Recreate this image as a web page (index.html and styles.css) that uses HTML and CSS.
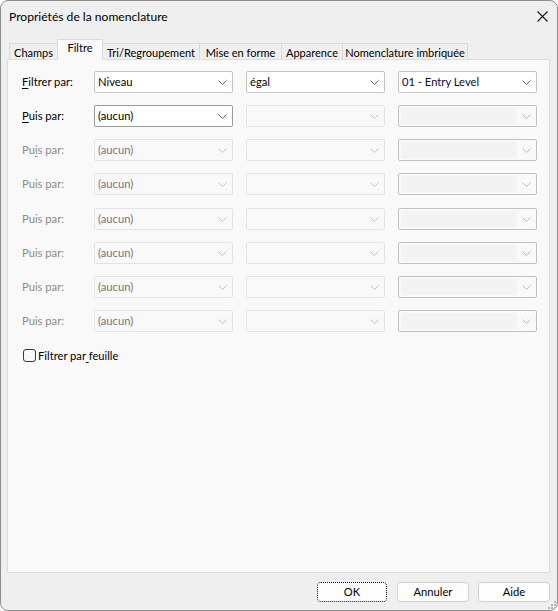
FILE: index.html
```html
<!DOCTYPE html>
<html lang="fr">
<head>
<meta charset="utf-8">
<title>Propriétés de la nomenclature</title>
<link rel="stylesheet" href="styles.css">
</head>
<body>
<div class="window">
  <div class="titlebar">
    <span class="title">Propriétés de la nomenclature</span>
    <svg class="close" width="11" height="11" viewBox="0 0 11 11"><path d="M0.5 0.5 L10.5 10.5 M10.5 0.5 L0.5 10.5" stroke="#1c1c1c" stroke-width="1.1" fill="none"/></svg>
  </div>
  <div class="tabs">
    <div class="tab w-champs">Champs</div>
    <div class="tab active w-filtre">Filtre</div>
    <div class="tab w-tri">Tri/Regroupement</div>
    <div class="tab w-mise">Mise en forme</div>
    <div class="tab w-app">Apparence</div>
    <div class="tab w-nom">Nomenclature imbriquée</div>
  </div>
  <div class="panel">
    <div class="grid">
      <div class="label"><u>F</u>iltrer par:</div>
      <div class="combo on"><span>Niveau</span><svg class="chev" viewBox="0 0 9 5"><path d="M0.5 0.5 L4.5 4.5 L8.5 0.5" fill="none" stroke="#5f5f5f" stroke-width="1"/></svg></div>
      <div class="combo on"><span>égal</span><svg class="chev" viewBox="0 0 9 5"><path d="M0.5 0.5 L4.5 4.5 L8.5 0.5" fill="none" stroke="#5f5f5f" stroke-width="1"/></svg></div>
      <div class="combo on"><span class="navy">01 - Entry Level</span><svg class="chev" viewBox="0 0 9 5"><path d="M0.5 0.5 L4.5 4.5 L8.5 0.5" fill="none" stroke="#5f5f5f" stroke-width="1"/></svg></div>

      <div class="label"><u>P</u>uis par:</div>
      <div class="combo on focus"><span>(aucun)</span><svg class="chev" viewBox="0 0 9 5"><path d="M0.5 0.5 L4.5 4.5 L8.5 0.5" fill="none" stroke="#5f5f5f" stroke-width="1"/></svg></div>
      <div class="combo off"><svg class="chev" viewBox="0 0 9 5"><path d="M0.5 0.5 L4.5 4.5 L8.5 0.5" fill="none" stroke="#c4c4c4" stroke-width="1"/></svg></div>
      <div class="combo edit"><i class="field"></i><svg class="chev" viewBox="0 0 9 5"><path d="M0.5 0.5 L4.5 4.5 L8.5 0.5" fill="none" stroke="#b8b8b8" stroke-width="1"/></svg></div>

      <div class="label dis">Pu<u>i</u>s par:</div>
      <div class="combo off"><span>(aucun)</span><svg class="chev" viewBox="0 0 9 5"><path d="M0.5 0.5 L4.5 4.5 L8.5 0.5" fill="none" stroke="#c4c4c4" stroke-width="1"/></svg></div>
      <div class="combo off"><svg class="chev" viewBox="0 0 9 5"><path d="M0.5 0.5 L4.5 4.5 L8.5 0.5" fill="none" stroke="#c4c4c4" stroke-width="1"/></svg></div>
      <div class="combo edit"><i class="field"></i><svg class="chev" viewBox="0 0 9 5"><path d="M0.5 0.5 L4.5 4.5 L8.5 0.5" fill="none" stroke="#b8b8b8" stroke-width="1"/></svg></div>

      <div class="label dis">Puis par:</div>
      <div class="combo off"><span>(aucun)</span><svg class="chev" viewBox="0 0 9 5"><path d="M0.5 0.5 L4.5 4.5 L8.5 0.5" fill="none" stroke="#c4c4c4" stroke-width="1"/></svg></div>
      <div class="combo off"><svg class="chev" viewBox="0 0 9 5"><path d="M0.5 0.5 L4.5 4.5 L8.5 0.5" fill="none" stroke="#c4c4c4" stroke-width="1"/></svg></div>
      <div class="combo edit"><i class="field"></i><svg class="chev" viewBox="0 0 9 5"><path d="M0.5 0.5 L4.5 4.5 L8.5 0.5" fill="none" stroke="#b8b8b8" stroke-width="1"/></svg></div>

      <div class="label dis">Puis par:</div>
      <div class="combo off"><span>(aucun)</span><svg class="chev" viewBox="0 0 9 5"><path d="M0.5 0.5 L4.5 4.5 L8.5 0.5" fill="none" stroke="#c4c4c4" stroke-width="1"/></svg></div>
      <div class="combo off"><svg class="chev" viewBox="0 0 9 5"><path d="M0.5 0.5 L4.5 4.5 L8.5 0.5" fill="none" stroke="#c4c4c4" stroke-width="1"/></svg></div>
      <div class="combo edit"><i class="field"></i><svg class="chev" viewBox="0 0 9 5"><path d="M0.5 0.5 L4.5 4.5 L8.5 0.5" fill="none" stroke="#b8b8b8" stroke-width="1"/></svg></div>

      <div class="label dis">Puis par:</div>
      <div class="combo off"><span>(aucun)</span><svg class="chev" viewBox="0 0 9 5"><path d="M0.5 0.5 L4.5 4.5 L8.5 0.5" fill="none" stroke="#c4c4c4" stroke-width="1"/></svg></div>
      <div class="combo off"><svg class="chev" viewBox="0 0 9 5"><path d="M0.5 0.5 L4.5 4.5 L8.5 0.5" fill="none" stroke="#c4c4c4" stroke-width="1"/></svg></div>
      <div class="combo edit"><i class="field"></i><svg class="chev" viewBox="0 0 9 5"><path d="M0.5 0.5 L4.5 4.5 L8.5 0.5" fill="none" stroke="#b8b8b8" stroke-width="1"/></svg></div>

      <div class="label dis">Puis par:</div>
      <div class="combo off"><span>(aucun)</span><svg class="chev" viewBox="0 0 9 5"><path d="M0.5 0.5 L4.5 4.5 L8.5 0.5" fill="none" stroke="#c4c4c4" stroke-width="1"/></svg></div>
      <div class="combo off"><svg class="chev" viewBox="0 0 9 5"><path d="M0.5 0.5 L4.5 4.5 L8.5 0.5" fill="none" stroke="#c4c4c4" stroke-width="1"/></svg></div>
      <div class="combo edit"><i class="field"></i><svg class="chev" viewBox="0 0 9 5"><path d="M0.5 0.5 L4.5 4.5 L8.5 0.5" fill="none" stroke="#b8b8b8" stroke-width="1"/></svg></div>

      <div class="label dis">Puis par:</div>
      <div class="combo off"><span>(aucun)</span><svg class="chev" viewBox="0 0 9 5"><path d="M0.5 0.5 L4.5 4.5 L8.5 0.5" fill="none" stroke="#c4c4c4" stroke-width="1"/></svg></div>
      <div class="combo off"><svg class="chev" viewBox="0 0 9 5"><path d="M0.5 0.5 L4.5 4.5 L8.5 0.5" fill="none" stroke="#c4c4c4" stroke-width="1"/></svg></div>
      <div class="combo edit"><i class="field"></i><svg class="chev" viewBox="0 0 9 5"><path d="M0.5 0.5 L4.5 4.5 L8.5 0.5" fill="none" stroke="#b8b8b8" stroke-width="1"/></svg></div>
    </div>
    <label class="check"><span class="box"></span><span>Filtrer par<u> </u>feuille</span></label>
  </div>
  <div class="footer">
    <div class="btn ok">OK</div>
    <div class="btn">Annuler</div>
    <div class="btn">Aide</div>
    <svg class="grip" width="10" height="10" viewBox="0 0 10 10">
      <rect x="7" y="1" width="2" height="2" fill="#b5b5b5"/>
      <rect x="4" y="4" width="2" height="2" fill="#b5b5b5"/>
      <rect x="7" y="4" width="2" height="2" fill="#b5b5b5"/>
      <rect x="1" y="7" width="2" height="2" fill="#b5b5b5"/>
      <rect x="4" y="7" width="2" height="2" fill="#b5b5b5"/>
      <rect x="7" y="7" width="2" height="2" fill="#b5b5b5"/>
    </svg>
  </div>
</div>
</body>
</html>
```

FILE: styles.css
```css
* { box-sizing: border-box; }
html, body { margin: 0; padding: 0; background: #ffffff; }
body {
  font-family: "Segoe UI", Lato, "Open Sans", sans-serif;
  font-size: 11.2px;
  color: #000;
}
.window {
  width: 558px;
  height: 611px;
  border: 1px solid #8e8e8e;
  border-radius: 8px;
  background: #efefef;
  display: flex;
  flex-direction: column;
  position: relative;
  overflow: hidden;
}
.titlebar {
  height: 30px;
  display: flex;
  align-items: center;
  justify-content: space-between;
  padding-left: 8px;
  padding-right: 9px;
}
.title { font-size: 12.1px; color: #000; }
.close { display: block; }

.tabs {
  display: flex;
  align-items: flex-start;
  height: 21px;
  margin-top: 8px;
  margin-left: 8px;
  margin-bottom: -1px;
  position: relative;
  z-index: 2;
  font-size: 11px;
}
.tab {
  height: 16px;
  margin-top: 4px;
  margin-left: -1px;
  border: 1px solid #d9d9d9;
  border-bottom: none;
  background: #efefef;
  display: flex;
  align-items: center;
  justify-content: center;
  white-space: nowrap;
  color: #000;
  padding-top: 1px;
}
.tab:first-child { margin-left: 0; }
.tab.active {
  height: 21px;
  margin-top: 0;
  background: #f9f9f9;
  position: relative;
  z-index: 3;
  align-items: flex-start;
  padding-top: 1px;
}
.w-champs { width: 49px; }
.w-filtre { width: 46px; }
.w-tri { width: 98px; }
.w-mise { width: 83px; }
.w-app { width: 62px; }
.w-nom { width: 126px; }

.panel {
  margin-left: 6px;
  width: 543px;
  height: 514px;
  border: 1px solid #dcdcdc;
  background: #f9f9f9;
  padding: 11px 0 0 14px;
  position: relative;
  z-index: 1;
}
.grid {
  display: grid;
  grid-template-columns: 59px 139px 139px 139px;
  column-gap: 13px;
  row-gap: 12.15px;
  grid-auto-rows: 22px;
}
.label {
  display: flex;
  align-items: center;
  white-space: nowrap;
  padding-bottom: 1px;
}
.label.dis { color: #8a8a8a; }
u { text-decoration: underline; text-underline-offset: 2px; }

.combo {
  position: relative;
  border: 1px solid #c6c6c6;
  border-radius: 2px;
  display: flex;
  align-items: center;
  padding-left: 3px;
  white-space: nowrap;
}
.combo span { padding-bottom: 1px; }
.combo.on { background: #ffffff; border-color: #c4c4c4; }
.combo.focus { border-color: #9a9a9a; }
.combo.off { background: #f9f9f9; border-color: #e4e4e4; color: #7a7470; }
.combo.edit { background: #f9f9f9; border-color: #c0c0c0; }
.navy { color: #0b0b30; }
.field {
  position: absolute;
  left: 2px;
  top: 2px;
  bottom: 2px;
  right: 19px;
  background: #f3f3f3;
}
.chev {
  position: absolute;
  right: 5px;
  top: 8px;
  width: 9px;
  height: 5px;
}

.check {
  display: flex;
  align-items: center;
  margin-top: 17px;
  margin-left: 1px;
  gap: 2px;
}
.box {
  width: 13px;
  height: 13px;
  border: 1px solid #3a3a3a;
  border-radius: 3px;
  background: #f9f9f9;
}
.check span:last-child { padding-bottom: 1px; }

.footer {
  display: flex;
  justify-content: flex-end;
  gap: 9px;
  padding-right: 7px;
  padding-top: 9px;
  position: relative;
  flex: 1;
}
.btn {
  width: 72px;
  height: 20px;
  border: 1px solid #d0d0d0;
  border-radius: 4px;
  background: #fdfdfd;
  display: flex;
  align-items: center;
  justify-content: center;
  padding-bottom: 1px;
}
.btn.ok {
  width: 70px;
  margin-right: 1px;
  border: 1px dotted #111;
}
.grip {
  position: absolute;
  right: 0px;
  bottom: 0px;
}
```
